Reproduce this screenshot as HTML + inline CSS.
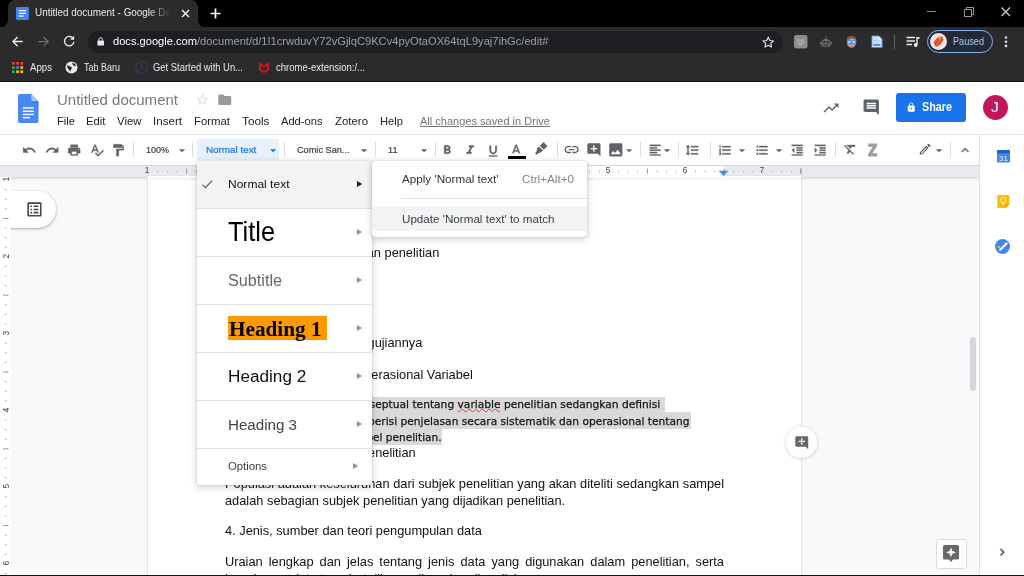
<!DOCTYPE html>
<html lang="en">
<head>
<meta charset="utf-8">
<title>Untitled document - Google Docs</title>
<style>
*{box-sizing:border-box;margin:0;padding:0}
html,body{width:1024px;height:576px;overflow:hidden;background:#fff}
body{opacity:.999}
body{position:relative;font-family:"Liberation Sans",sans-serif;color:#202124;-webkit-font-smoothing:antialiased}
.abs{position:absolute}
svg{position:absolute;overflow:visible}
.t{position:absolute;white-space:nowrap;line-height:1}
/* ---------- browser chrome ---------- */
#tabstrip{left:0;top:0;width:1024px;height:28px;background:#000}
#tab{left:8px;top:0;width:190px;height:28px;background:#2b2b2b;border-radius:7px 7px 0 0}
#tab:before,#tab:after{content:"";position:absolute;bottom:0;width:8px;height:8px;background:radial-gradient(circle at 0 0,rgba(0,0,0,0) 7.5px,#2b2b2b 8px)}
#tab:before{left:-8px}
#tab:after{right:-8px;transform:scaleX(-1)}
#navbar{left:0;top:27px;width:1024px;height:30px;background:#2b2b2b}
#omni{left:87.500px;top:30.800px;width:695.500px;height:22px;border-radius:11px;background:#1e1f22}
#bookbar{left:0;top:57px;width:1024px;height:24px;background:#2b2b2b}
#chromeedge{left:0;top:81px;width:1024px;height:1px;background:#111}
.ct{color:#e8eaed;font-size:10.500px}
.sx{transform-origin:0 0}
/* ---------- docs header ---------- */
.menu{font-size:11.4px;color:#202124;top:115.800px}
#tb{left:0;top:133.500px;width:1024px;height:32px;border-top:1px solid #e2e3e5;background:#fff}
svg[width="14.4"] path{stroke:#5f6368;stroke-width:.55px}
.sep{position:absolute;top:141.500px;width:1px;height:15.500px;background:#dadce0}
.tbt{font-size:9.800px;color:#3c4043;top:144.800px;-webkit-text-stroke:.2px currentColor}
/* ---------- doc area ---------- */
#canvas{left:0;top:166px;width:979px;height:410px;background:#f8f9fa}
#hruler{left:0;top:165px;width:979px;height:12.500px;background:#e8eaed;border-top:1px solid #d5d8dc;border-bottom:1.500px solid #d9dbdf}
#page{left:148px;top:176px;width:653px;height:400px;background:#fff;box-shadow:0 0 0 1px #e4e5e7}
.doc{font-size:14.2px;color:#111;line-height:1}
body>*{}
.comic{font-family:"DejaVu Sans","Liberation Sans",sans-serif;font-size:12.6px;color:#111;letter-spacing:-.2px;font-style:italic}
.hl{position:absolute;background:#d9d9d9}
/* ---------- menus ---------- */
#menu1{left:197px;top:160.500px;width:174.500px;height:324px;background:#fff;box-shadow:0 2px 6px 1px rgba(60,64,67,.22),0 0 2px rgba(60,64,67,.2);border-radius:0 0 3px 3px}
.row{position:absolute;left:0;width:175px;border-bottom:1px solid #dddfe2}
.arr{position:absolute;left:159px;width:0;height:0;border-left:6px solid #8b8e92;border-top:3px solid transparent;border-bottom:3px solid transparent}
#menu2{left:371.500px;top:160.700px;width:215.500px;height:76.300px;background:#fff;box-shadow:0 2px 6px 1px rgba(60,64,67,.22),0 0 2px rgba(60,64,67,.2);border-radius:4px}
.m2{font-size:12.5px;color:#3c4043;letter-spacing:-.05px}
/* ---------- side panel ---------- */
#side{left:979px;top:134.500px;width:45px;height:442px;background:#fff;border-left:1px solid #e0e1e3}
</style>
</head>
<body>
<!-- ======= BROWSER CHROME ======= -->
<div id="tabstrip" class="abs"></div>
<div id="tab" class="abs"></div>
<div id="navbar" class="abs"></div>
<div id="omni" class="abs"></div>
<div id="bookbar" class="abs"></div>
<div id="chromeedge" class="abs"></div>

<!-- tab -->
<svg class="abs" style="left:16.200px;top:6.900px" width="12.900" height="12.900" viewBox="0 0 14 14"><rect x="0" y="0" width="14" height="14" rx="1.5" fill="#4285f4"/><rect x="3" y="3.4" width="8" height="1.3" fill="#fff"/><rect x="3" y="6.3" width="8" height="1.3" fill="#fff"/><rect x="3" y="9.2" width="5.2" height="1.3" fill="#fff"/></svg>
<div class="t ct" id="tabtitle" style="transform-origin:0 0;transform:scaleX(.962);font-size:10.300px;left:35px;top:8.200px;width:141px;overflow:hidden;-webkit-mask-image:linear-gradient(90deg,#000 119px,transparent 141px)">Untitled document - Google Docs</div>
<svg class="abs" style="left:181px;top:9px" width="9" height="9" viewBox="0 0 9 9"><path d="M1 1L8 8M8 1L1 8" stroke="#e8eaed" stroke-width="1.5" fill="none"/></svg>
<svg class="abs" style="left:210px;top:8px" width="11" height="11" viewBox="0 0 11 11"><path d="M5.5 0.5V10.5M0.5 5.5H10.5" stroke="#fff" stroke-width="1.7" fill="none"/></svg>
<!-- window controls -->
<svg class="abs" style="left:926px;top:6px" width="12" height="12" viewBox="0 0 12 12"><path d="M1 5.5H10" stroke="#8a8a8a" stroke-width="1" fill="none"/></svg>
<svg class="abs" style="left:963px;top:6px" width="12" height="12" viewBox="0 0 12 12"><path d="M1.5 3.5H8.5V10.5H1.5ZM3.5 3.5V1.5H10.5V8.5H8.5" stroke="#9a9a9a" stroke-width="1" fill="none"/></svg>
<svg class="abs" style="left:1000px;top:6px" width="12" height="12" viewBox="0 0 12 12"><path d="M1.5 1.5L10 10M10 1.5L1.5 10" stroke="#d8d8d8" stroke-width="1.1" fill="none"/></svg>
<!-- nav buttons -->
<svg class="abs" style="left:12px;top:35.500px" width="11.200" height="11.200" viewBox="0 0 13 13"><path d="M12.5 6.5H1.5M6.5 1.2L1.2 6.5L6.5 11.8" stroke="#e8eaed" stroke-width="1.700" fill="none"/></svg>
<svg class="abs" style="left:37.800px;top:35.500px" width="11.200" height="11.200" viewBox="0 0 13 13"><path d="M0.5 6.5H11.5M6.5 1.2L11.8 6.5L6.5 11.8" stroke="#6b6d70" stroke-width="1.5" fill="none"/></svg>
<svg class="abs" style="left:62.800px;top:35px" width="12.400" height="12.400" viewBox="0 0 14 14"><path d="M11.6 4.2A5.3 5.3 0 1 0 12.3 7.8" stroke="#e8eaed" stroke-width="1.5" fill="none"/><path d="M12.6 0.8V5.4H8Z" fill="#e8eaed"/></svg>
<!-- omnibox -->
<svg class="abs" style="left:97.200px;top:37.200px" width="7.400" height="9" viewBox="0 0 9 11"><rect x="0.5" y="4.3" width="8" height="6.2" rx="0.8" fill="#e8eaed"/><path d="M2.4 4.5V3A2.1 2.1 0 0 1 6.6 3V4.5" stroke="#e8eaed" stroke-width="1.2" fill="none"/></svg>
<div class="t" id="url" style="transform-origin:0 0;transform:scaleX(0.9420);left:113px;top:36px;font-size:11.800px;color:#fff">docs.google.com<span style="color:#9aa0a6">/document/d/1I1crwduvY72vGjlqC9KCv4pyOtaOX64tqL9yaj7ihGc/edit#</span></div>
<svg class="abs" style="left:761.500px;top:35.700px" width="12.500" height="12.500" viewBox="0 0 14 14"><path d="M7 1.3L8.75 5.1L12.9 5.55L9.8 8.35L10.65 12.45L7 10.35L3.35 12.45L4.2 8.35L1.1 5.55L5.25 5.1Z" stroke="#e8eaed" stroke-width="1.2" fill="none" stroke-linejoin="round"/></svg>
<!-- extensions -->
<svg class="abs" style="left:793.500px;top:35px" width="13.500" height="13.500" viewBox="0 0 14 14"><rect x="0.500" y="0.500" width="13" height="13" rx="1.500" fill="#8b8d90" stroke="#a2a4a7" stroke-width=".7"/><path d="M4 3.800L5.600 5.200H8.400L10 3.800V8Q10 10.600 7 10.600Q4 10.600 4 8Z" fill="#9d9fa2" stroke="#b3b5b8" stroke-width=".7"/></svg>
<svg class="abs" style="left:818.500px;top:34.500px" width="14" height="14" viewBox="0 0 15 15"><path d="M3 12.500V8Q3 4 7.500 4Q12 4 12 8V12.500Z" fill="#626467"/><rect x="6.900" y="1.200" width="1.200" height="3" fill="#626467"/><rect x="0.800" y="7" width="2.200" height="3.500" rx=".8" fill="#626467"/><rect x="12" y="7" width="2.200" height="3.500" rx=".8" fill="#626467"/><circle cx="5.600" cy="7.600" r="1.200" fill="#2b2b2b"/><circle cx="9.400" cy="7.600" r="1.200" fill="#2b2b2b"/><rect x="5" y="10.300" width="5" height="1" fill="#2b2b2b"/></svg>
<svg class="abs" style="left:845px;top:35px" width="13" height="13.500" viewBox="0 0 15 15"><ellipse cx="7.500" cy="8.300" rx="5.400" ry="6" fill="#e8a27c"/><path d="M1.800 7Q1.500 1 7.500 1Q13.500 1 13.200 7Q11.500 4 8.500 3.800Q5 4 1.800 7Z" fill="#8b5a3c"/><circle cx="4.800" cy="8" r="2.300" fill="#e8f2ff" stroke="#3c82f0" stroke-width="1.300"/><circle cx="10.200" cy="8" r="2.300" fill="#e8f2ff" stroke="#3c82f0" stroke-width="1.300"/><circle cx="4.800" cy="8" r=".8" fill="#3c82f0"/><circle cx="10.200" cy="8" r=".8" fill="#3c82f0"/><path d="M5.800 12.200Q7.500 13.200 9.200 12.200" stroke="#b0503c" stroke-width=".9" fill="none"/></svg>
<svg class="abs" style="left:871px;top:35px" width="12" height="13.500" viewBox="0 0 14 15"><path d="M1 0.700H9.500L13 4.200V14.300H1Z" fill="#dfeafb" stroke="#3f7fe3" stroke-width="1.100"/><path d="M3 4H8M3 6H11M3 8H11" stroke="#9cc0f5" stroke-width=".9"/><rect x="2.800" y="10" width="8.400" height="2.400" fill="#4a90e8"/></svg>
<div class="abs" style="left:894px;top:35px;width:1px;height:14px;background:#5f6368"></div>
<svg class="abs" style="left:906px;top:36px" width="14" height="12" viewBox="0 0 14 12"><path d="M0.500 1.5H9M0.500 5H9M0.500 8.500H6" stroke="#e8eaed" stroke-width="1.4" fill="none"/><path d="M11 1V8.500" stroke="#e8eaed" stroke-width="1.4" fill="none"/><circle cx="9.700" cy="9" r="1.900" fill="#e8eaed"/><path d="M11 1H13.500V2.800H11Z" fill="#e8eaed"/></svg>
<!-- profile pill -->
<div class="abs" style="left:927px;top:30px;width:66px;height:23px;border-radius:12px;border:1px solid #8ab4f8;background:#242a35"></div>
<svg class="abs" style="left:930px;top:33px" width="17" height="17" viewBox="0 0 17 17"><circle cx="8.500" cy="8.500" r="8.500" fill="#f6e3df"/><path d="M3.500 9L8 4L12.500 3.500L13.500 7L10 12L6 14L6.500 10.500Z" fill="#e0532d"/><path d="M8 4L12.500 3.500L9.500 8Z" fill="#f08a4b"/><path d="M3.500 9L6.500 10.500L6 14Z" fill="#b93a1e"/></svg>
<div class="t" style="transform-origin:0 0;transform:scaleX(0.8873);left:953px;top:36.800px;font-size:10.300px;color:#a8c7fa">Paused</div>
<svg class="abs" style="left:1004.300px;top:35.900px" width="4" height="12" viewBox="0 0 4 12"><circle cx="2" cy="1.500" r="1.300" fill="#dadce0"/><circle cx="2" cy="5.700" r="1.300" fill="#dadce0"/><circle cx="2" cy="9.900" r="1.300" fill="#dadce0"/></svg>
<!-- bookmarks -->
<svg class="abs" style="left:12px;top:61.500px" width="11" height="11" viewBox="0 0 11 11"><rect x="0.0" y="0.0" width="2.700" height="2.700" fill="#ea4335"/><rect x="4.2" y="0.0" width="2.700" height="2.700" fill="#ea4335"/><rect x="8.4" y="0.0" width="2.700" height="2.700" fill="#ea4335"/><rect x="0.0" y="4.2" width="2.700" height="2.700" fill="#34a853"/><rect x="4.2" y="4.2" width="2.700" height="2.700" fill="#4285f4"/><rect x="8.4" y="4.2" width="2.700" height="2.700" fill="#fbbc04"/><rect x="0.0" y="8.4" width="2.700" height="2.700" fill="#34a853"/><rect x="4.2" y="8.4" width="2.700" height="2.700" fill="#fbbc04"/><rect x="8.4" y="8.4" width="2.700" height="2.700" fill="#fbbc04"/></svg>
<div class="t ct" style="transform-origin:0 0;transform:scaleX(0.9191);left:30px;top:62px">Apps</div>
<svg class="abs" style="left:65px;top:61px" width="13" height="13" viewBox="0 0 13 13"><circle cx="6.500" cy="6.500" r="6" fill="#e8eaed"/><path d="M2 4.500C4 4 5 5.500 6.500 6C7.500 7 6 8.500 5.500 10C4 9 2 7.500 2 4.500ZM7.500 1.500C9 2 10.500 3 11 5C9.500 5.500 8.500 4.500 7.500 3.500Z" fill="#2b2b2b"/></svg>
<div class="t ct" style="transform-origin:0 0;transform:scaleX(0.8565);left:84px;top:62px">Tab Baru</div>
<svg class="abs" style="left:134px;top:60px" width="15" height="15" viewBox="0 0 15 15"><path d="M7.500 1L13 4.200V10.800L7.500 14L2 10.800V4.200Z" stroke="#2c3a55" stroke-width="1.200" fill="none"/><path d="M7.500 1V7.500L2 10.800M7.500 7.500L13 10.800" stroke="#2c3a55" stroke-width="1.200" fill="none"/></svg>
<div class="t ct" style="transform-origin:0 0;transform:scaleX(0.8965);left:153px;top:62px">Get Started with Un...</div>
<svg class="abs" style="left:258px;top:61px" width="12" height="12.500" viewBox="0 0 12 13"><path d="M0.800 1.200L3.800 2.600L6 4.400L8.200 2.600L11.200 1.200V10L6 12.800L0.800 10Z" fill="#c4161c"/><path d="M3 4.600L6 6.900L9 4.600V8.900L6 10.500L3 8.900Z" fill="#2b2b2b"/></svg>
<div class="t ct" style="transform-origin:0 0;transform:scaleX(0.9077);left:276px;top:62px">chrome-extension:/...</div>
<!--CHROME-CONTENT-->

<!-- ======= DOCS HEADER ======= -->
<svg class="abs" style="left:18.100px;top:93.900px" width="20.500" height="29" viewBox="0 0 20.500 29"><path d="M2 0H13.300L20.500 7.200V27Q20.500 29 18.500 29H2Q0 29 0 27V2Q0 0 2 0Z" fill="#4688f4"/><path d="M13.300 0L20.500 7.200H15.300Q13.300 7.200 13.300 5.200Z" fill="#a6c5fa"/><path d="M14 7.200H20.500V12Z" fill="#3b78e0" opacity=".5"/><rect x="4.700" y="13.200" width="11.200" height="1.500" fill="#f1f6fe"/><rect x="4.700" y="16.500" width="11.200" height="1.500" fill="#f1f6fe"/><rect x="4.700" y="19.700" width="11.200" height="1.500" fill="#f1f6fe"/><rect x="4.700" y="22.900" width="7.500" height="1.500" fill="#f1f6fe"/></svg>
<div class="t" id="doctitle" style="transform-origin:0 0;transform:scaleX(1.0008);left:57px;top:92px;font-size:15px;color:#75797e">Untitled document</div>
<svg class="abs" style="left:195.3px;top:91.6px" width="15" height="15" viewBox="0 0 24 24"><path d="M22 9.240l-7.190-.620L12 2 9.190 8.630 2 9.240l5.460 4.730L5.820 21 12 17.270 18.180 21l-1.630-7.030L22 9.240zM12 15.400l-3.760 2.270 1-4.280-3.320-2.880 4.380-.380L12 6.100l1.710 4.040 4.380.380-3.320 2.880 1 4.280L12 15.400z" fill="#dcdcdc"/></svg>
<svg class="abs" style="left:217px;top:91.7px" width="15.5" height="15.5" viewBox="0 0 24 24"><path d="M10 4H4c-1.100 0-1.990.900-1.990 2L2 18c0 1.100.900 2 2 2h16c1.100 0 2-.900 2-2V8c0-1.100-.900-2-2-2h-8l-2-2z" fill="#9a9a9a"/></svg>
<div class="t menu" style="transform-origin:0 0;transform:scaleX(0.9804);left:57px">File</div>
<div class="t menu" style="transform-origin:0 0;transform:scaleX(0.9928);left:86px">Edit</div>
<div class="t menu" style="transform-origin:0 0;transform:scaleX(1.0006);left:117px">View</div>
<div class="t menu" style="transform-origin:0 0;transform:scaleX(1.0175);left:153px">Insert</div>
<div class="t menu" style="transform-origin:0 0;transform:scaleX(0.9978);left:194px">Format</div>
<div class="t menu" style="transform-origin:0 0;transform:scaleX(1.0341);left:242px">Tools</div>
<div class="t menu" style="transform-origin:0 0;transform:scaleX(0.9779);left:281px">Add-ons</div>
<div class="t menu" style="transform-origin:0 0;transform:scaleX(1.0024);left:335px">Zotero</div>
<div class="t menu" style="transform-origin:0 0;transform:scaleX(0.9813);left:380px">Help</div>
<div class="t menu" id="saved" style="transform-origin:0 0;transform:scaleX(0.9685);left:420px;color:#70757a;text-decoration:underline">All changes saved in Drive</div>
<svg class="abs" style="left:821.5px;top:98.5px" width="18" height="18" viewBox="0 0 24 24"><path d="M16 6l2.290 2.290-4.880 4.880-4-4L2 16.590 3.410 18l6-6 4 4 6.300-6.290L22 12V6z" fill="#5f6368"/></svg>
<svg class="abs" style="left:862px;top:98px" width="18.5" height="18.5" viewBox="0 0 24 24"><path d="M21.990 4c0-1.100-.890-2-1.990-2H4c-1.100 0-2 .900-2 2v12c0 1.100.900 2 2 2h14l4 4-.010-18zM18 14H6v-2h12v2zm0-3H6V9h12v2zm0-3H6V6h12v2z" fill="#5f6368"/></svg>
<div class="abs" style="left:896px;top:93px;width:69.800px;height:29px;border-radius:3px;background:#1a73e8"></div>
<svg class="abs" style="left:906px;top:101.5px" width="10.5" height="10.5" viewBox="0 0 24 24"><path d="M18 8h-1V6c0-2.760-2.240-5-5-5S7 3.240 7 6v2H6c-1.100 0-2 .900-2 2v10c0 1.100.900 2 2 2h12c1.100 0 2-.900 2-2V10c0-1.100-.900-2-2-2zm-6 9c-1.100 0-2-.900-2-2s.900-2 2-2 2 .900 2 2-.900 2-2 2zm3.100-9H8.900V6c0-1.710 1.390-3.100 3.100-3.100 1.710 0 3.100 1.390 3.100 3.100v2z" fill="#fff"/></svg>
<div class="t" id="share" style="transform-origin:0 0;transform:scaleX(0.8993);left:921.500px;top:100.500px;font-size:12px;font-weight:bold;color:#fff">Share</div>
<div class="abs" style="left:982.500px;top:94.500px;width:25.500px;height:25.500px;border-radius:50%;background:#c2185b"></div>
<div class="t" style="left:991px;top:99.300px;font-size:15.500px;color:#fff">J</div>
<div id="tb" class="abs"></div>
<svg class="abs" style="left:22px;top:142.6px" width="14.4" height="14.4" viewBox="0 0 24 24"><path d="M12.5 8c-2.65 0-5.05.99-6.9 2.6L2 7v9h9l-3.62-3.620c1.390-1.160 3.160-1.880 5.120-1.880 3.540 0 6.550 2.310 7.600 5.500l2.370-.780C21.080 11.030 17.150 8 12.500 8z" fill="#5f6368"/></svg>
<svg class="abs" style="left:44.7px;top:142.6px" width="14.4" height="14.4" viewBox="0 0 24 24"><path d="M18.400 10.600C16.550 8.990 14.150 8 11.500 8c-4.650 0-8.580 3.030-9.960 7.220L3.900 16c1.050-3.190 4.050-5.500 7.600-5.500 1.950 0 3.730.720 5.120 1.880L13 16h9V7l-3.600 3.600z" fill="#5f6368"/></svg>
<svg class="abs" style="left:66.8px;top:143px" width="14.4" height="14.4" viewBox="0 0 24 24"><path d="M19 8H5c-1.660 0-3 1.340-3 3v6h4v4h12v-4h4v-6c0-1.660-1.340-3-3-3zm-3 11H8v-5h8v5zm3-7c-.550 0-1-.450-1-1s.450-1 1-1 1 .450 1 1-.450 1-1 1zm-1-9H6v4h12V3z" fill="#5f6368"/></svg>
<svg class="abs" style="left:89.5px;top:143.2px" width="14.4" height="14.4" viewBox="0 0 24 24"><path d="M12.450 16h2.090L9.430 3H7.570L2.460 16h2.090l1.120-3h5.640l1.140 3zm-6.020-5L8.500 5.480 10.570 11H6.430zm15.160.590l-8.090 8.090L9.830 16l-1.410 1.410 5.090 5.090L23 13l-1.410-1.410z" fill="#5f6368"/></svg>
<svg class="abs" style="left:111.4px;top:143.4px" width="14.4" height="14.4" viewBox="0 0 24 24"><path d="M18 4V3c0-.550-.450-1-1-1H5c-.550 0-1 .450-1 1v4c0 .550.450 1 1 1h12c.550 0 1-.450 1-1V6h1v4H9v11c0 .550.450 1 1 1h2c.550 0 1-.450 1-1v-9h8V4h-3z" fill="#5f6368"/></svg>
<div class="sep" style="left:133px"></div>
<div class="sep" style="left:192px"></div>
<div class="sep" style="left:283.5px"></div>
<div class="sep" style="left:374.5px"></div>
<div class="sep" style="left:434.5px"></div>
<div class="sep" style="left:556.5px"></div>
<div class="sep" style="left:639.5px"></div>
<div class="sep" style="left:678px"></div>
<div class="sep" style="left:709.5px"></div>
<div class="sep" style="left:834.5px"></div>
<div class="sep" style="left:950px"></div>
<div class="t tbt" style="transform-origin:0 0;transform:scaleX(0.9177);left:146px">100%</div>
<svg class="abs" style="left:179.3px;top:148.6px" width="6.2" height="3.4" viewBox="0 0 10 5"><path d="M0 0L5 5L10 0Z" fill="#5f6368"/></svg>
<div class="abs" style="left:197px;top:139.200px;width:82px;height:21.300px;background:#e8f0fe;border-radius:2px 2px 0 0"></div>
<div class="t tbt" id="ntbtn" style="transform-origin:0 0;transform:scaleX(1.0041);left:205.500px;color:#1a73e8">Normal text</div>
<svg class="abs" style="left:269.79999999999995px;top:148.6px" width="6.2" height="3.4" viewBox="0 0 10 5"><path d="M0 0L5 5L10 0Z" fill="#1a73e8"/></svg>
<div class="t tbt" id="fontbtn" style="transform-origin:0 0;transform:scaleX(0.9359);left:297px">Comic San...</div>
<svg class="abs" style="left:360.79999999999995px;top:148.6px" width="6.2" height="3.4" viewBox="0 0 10 5"><path d="M0 0L5 5L10 0Z" fill="#5f6368"/></svg>
<div class="t tbt" style="transform-origin:0 0;transform:scaleX(0.9339);left:387.600px">11</div>
<svg class="abs" style="left:420.9px;top:148.6px" width="6.2" height="3.4" viewBox="0 0 10 5"><path d="M0 0L5 5L10 0Z" fill="#5f6368"/></svg>
<svg class="abs" style="left:440.4px;top:142.85px" width="14.4" height="14.4" viewBox="0 0 24 24"><path d="M15.600 10.790c.970-.670 1.650-1.770 1.650-2.790 0-2.260-1.750-4-4-4H7v14h7.040c2.090 0 3.710-1.700 3.710-3.790 0-1.520-.860-2.820-2.150-3.420zM10 6.500h3c.830 0 1.500.670 1.500 1.500s-.670 1.500-1.500 1.500h-3v-3zm3.500 9H10v-3h3.500c.830 0 1.500.670 1.500 1.500s-.670 1.500-1.500 1.500z" fill="#5f6368"/></svg>
<svg class="abs" style="left:463px;top:142.85px" width="14.4" height="14.4" viewBox="0 0 24 24"><path d="M10 4v3h2.210l-3.420 8H6v3h8v-3h-2.210l3.420-8H18V4z" fill="#5f6368"/></svg>
<svg class="abs" style="left:485.5px;top:143.5px" width="14.4" height="14.4" viewBox="0 0 24 24"><path d="M12 17c3.310 0 6-2.690 6-6V3h-2.500v8c0 1.930-1.570 3.500-3.500 3.500S8.500 12.930 8.500 11V3H6v8c0 3.310 2.690 6 6 6zm-7 2v2h14v-2H5z" fill="#5f6368"/></svg>
<svg class="abs" style="left:509.2px;top:142.8px" width="14.4" height="14.4" viewBox="0 0 24 24"><path d="M11 3L5.500 17h2.250l1.120-3h6.250l1.120 3h2.250L13 3h-2zm-1.380 9L12 5.670 14.380 12H9.620z" fill="#5f6368"/></svg>
<div class="abs" style="left:508px;top:156.300px;width:18px;height:3px;background:#000"></div>
<svg class="abs" style="left:534px;top:142.500px" width="14.500" height="14.500" viewBox="0 0 14.500 14.500"><g transform="translate(1.900 10.600) rotate(-45)" fill="#5f6368"><path d="M-0.600 0.200L0.300 -0.900L2.200 -1.100L4.300 -2.800H7.200V2.800H4.300L2.400 1.400L-0.200 1.600Z"/><rect x="8.300" y="-2.800" width="5.200" height="5.600" rx=".7"/></g></svg>
<svg class="abs" style="left:563px;top:141.400px" width="17.200" height="17.200" viewBox="0 0 24 24"><path d="M3.900 12c0-1.710 1.390-3.100 3.100-3.100h4V7H7c-2.760 0-5 2.240-5 5s2.240 5 5 5h4v-1.900H7c-1.710 0-3.100-1.390-3.100-3.100zM8 13h8v-2H8v2zm9-6h-4v1.900h4c1.710 0 3.100 1.390 3.100 3.100s-1.390 3.100-3.100 3.100h-4V17h4c2.760 0 5-2.240 5-5s-2.240-5-5-5z" fill="#5f6368"/></svg>
<svg class="abs" style="left:586.2px;top:142.4px" width="15.8" height="15.8" viewBox="0 0 24 24"><path d="M22 4c0-1.100-.900-2-2-2H4c-1.100 0-2 .900-2 2v12c0 1.100.900 2 2 2h14l4 4V4zm-5 7h-4v4h-2v-4H7V9h4V5h2v4h4v2z" fill="#5f6368"/></svg>
<svg class="abs" style="left:606.8px;top:141.2px" width="17.6" height="17.6" viewBox="0 0 24 24"><path d="M21 19V5c0-1.100-.900-2-2-2H5c-1.100 0-2 .900-2 2v14c0 1.100.900 2 2 2h14c1.100 0 2-.900 2-2zM8.500 13.500l2.500 3.010L14.500 12l4.500 6H5l3.500-4.500z" fill="#5f6368"/></svg>
<svg class="abs" style="left:626.15px;top:148.6px" width="6.2" height="3.4" viewBox="0 0 10 5"><path d="M0 0L5 5L10 0Z" fill="#5f6368"/></svg>
<svg class="abs" style="left:648px;top:142.65px" width="14.4" height="14.4" viewBox="0 0 24 24"><path d="M15 15H3v2h12v-2zm0-8H3v2h12V7zM3 13h18v-2H3v2zm0 8h18v-2H3v2zM3 3v2h18V3H3z" fill="#5f6368"/></svg>
<svg class="abs" style="left:664.4px;top:148.6px" width="6.2" height="3.4" viewBox="0 0 10 5"><path d="M0 0L5 5L10 0Z" fill="#5f6368"/></svg>
<svg class="abs" style="left:685.4px;top:142.75px" width="14.4" height="14.4" viewBox="0 0 24 24"><path d="M6 7h2.500L5 3.500 1.500 7H4v10H1.500L5 20.500 8.500 17H6V7zm4-2v2h12V5H10zm0 14h12v-2H10v2zm0-6h12v-2H10v2z" fill="#5f6368"/></svg>
<svg class="abs" style="left:718.2px;top:142.6px" width="14.4" height="14.4" viewBox="0 0 24 24"><path d="M2 17h2v.5H3v1h1v.5H2v1h3v-4H2v1zm1-9h1V4H2v1h1v3zm-1 3h1.800L2 13.100v.900h3v-1H3.200L5 10.900V10H2v1zm5-6v2h14V5H7zm0 14h14v-2H7v2zm0-6h14v-2H7v2z" fill="#5f6368"/></svg>
<svg class="abs" style="left:739.4px;top:148.6px" width="6.2" height="3.4" viewBox="0 0 10 5"><path d="M0 0L5 5L10 0Z" fill="#5f6368"/></svg>
<svg class="abs" style="left:755.4px;top:142.6px" width="14.4" height="14.4" viewBox="0 0 24 24"><path d="M4 10.500c-.830 0-1.500.670-1.500 1.500s.670 1.500 1.500 1.500 1.500-.670 1.500-1.500-.670-1.500-1.500-1.500zm0-6c-.830 0-1.500.670-1.500 1.500S3.170 7.500 4 7.500 5.500 6.830 5.500 6 4.830 4.500 4 4.500zm0 12c-.830 0-1.500.680-1.500 1.500s.680 1.500 1.500 1.500 1.500-.680 1.500-1.500-.670-1.500-1.500-1.500zM7 19h14v-2H7v2zm0-6h14v-2H7v2zm0-8v2h14V5H7z" fill="#5f6368"/></svg>
<svg class="abs" style="left:776.3px;top:148.6px" width="6.2" height="3.4" viewBox="0 0 10 5"><path d="M0 0L5 5L10 0Z" fill="#5f6368"/></svg>
<svg class="abs" style="left:790.3px;top:142.6px" width="14.4" height="14.4" viewBox="0 0 24 24"><path d="M11 17h10v-2H11v2zm-8-5l4 4V8l-4 4zm0 9h18v-2H3v2zM3 3v2h18V3H3zm8 6h10V7H11v2zm0 4h10v-2H11v2z" fill="#5f6368"/></svg>
<svg class="abs" style="left:812.8px;top:142.6px" width="14.4" height="14.4" viewBox="0 0 24 24"><path d="M3 21h18v-2H3v2zM3 8v8l4-4-4-4zm8 9h10v-2H11v2zM3 3v2h18V3H3zm8 6h10V7H11v2zm0 4h10v-2H11v2z" fill="#5f6368"/></svg>
<svg class="abs" style="left:843.2px;top:142.2px" width="14.4" height="14.4" viewBox="0 0 24 24"><path d="M3.270 5L2 6.270l6.970 6.970L6.500 19h3l1.570-3.660L16.730 21 18 19.730 3.550 5.270 3.270 5zM6 5v.180L8.820 8h2.400l-.720 1.680 2.100 2.100L14.210 8H20V5H6z" fill="#5f6368"/></svg>
<div class="t" style="left:867.600px;top:143.700px;font-size:15px;font-weight:bold;font-family:'DejaVu Sans','Liberation Sans',sans-serif;color:#9e9e9e;-webkit-text-stroke:1px #9e9e9e;transform-origin:0 0;transform:scaleX(.86)">Z</div>
<svg class="abs" style="left:917.5px;top:141.8px" width="14.41" height="14.41" viewBox="0 0 24 24"><path d="M14.060 9.020l.920.920L5.920 19H5v-.920l9.060-9.060M17.660 3c-.250 0-.510.100-.700.290l-1.830 1.830 3.750 3.750 1.830-1.830c.390-.390.390-1.020 0-1.410l-2.340-2.340c-.200-.200-.450-.290-.710-.290zm-3.600 3.190L3 17.250V21h3.750L17.810 9.940l-3.750-3.750z" fill="#5f6368"/></svg>
<svg class="abs" style="left:936.3px;top:148.6px" width="6.2" height="3.4" viewBox="0 0 10 5"><path d="M0 0L5 5L10 0Z" fill="#5f6368"/></svg>
<svg class="abs" style="left:958.1px;top:142.5px" width="14.4" height="14.4" viewBox="0 0 24 24"><path d="M12 8l-6 6 1.410 1.410L12 10.830l4.590 4.580L18 14z" fill="#5f6368"/></svg>
<!--DOCS-HEADER-->

<!-- ======= DOC AREA ======= -->
<div id="canvas" class="abs"></div>
<div id="hruler" class="abs"></div>
<div id="page" class="abs"></div>
<div class="abs" style="left:225px;top:165.800px;width:498.500px;height:10px;background:#fff"></div>
<svg class="abs" style="left:-0.400px;top:-0.400px" width="1024" height="576"><rect x="157.3" y="170.500" width="1" height="2" fill="#b4b8bd"/><rect x="166.9" y="170.500" width="1" height="2" fill="#b4b8bd"/><rect x="176.5" y="170.500" width="1" height="2" fill="#b4b8bd"/><rect x="186.1" y="168.500" width="1" height="5.500" fill="#9aa0a6"/><rect x="195.7" y="170.500" width="1" height="2" fill="#b4b8bd"/><rect x="205.3" y="170.500" width="1" height="2" fill="#b4b8bd"/><rect x="214.9" y="170.500" width="1" height="2" fill="#b4b8bd"/><rect x="234.1" y="170.500" width="1" height="2" fill="#b4b8bd"/><rect x="243.7" y="170.500" width="1" height="2" fill="#b4b8bd"/><rect x="253.3" y="170.500" width="1" height="2" fill="#b4b8bd"/><rect x="262.9" y="168.500" width="1" height="5.500" fill="#9aa0a6"/><rect x="272.5" y="170.500" width="1" height="2" fill="#b4b8bd"/><rect x="282.1" y="170.500" width="1" height="2" fill="#b4b8bd"/><rect x="291.7" y="170.500" width="1" height="2" fill="#b4b8bd"/><rect x="310.9" y="170.500" width="1" height="2" fill="#b4b8bd"/><rect x="320.5" y="170.500" width="1" height="2" fill="#b4b8bd"/><rect x="330.1" y="170.500" width="1" height="2" fill="#b4b8bd"/><rect x="339.7" y="168.500" width="1" height="5.500" fill="#9aa0a6"/><rect x="349.3" y="170.500" width="1" height="2" fill="#b4b8bd"/><rect x="358.9" y="170.500" width="1" height="2" fill="#b4b8bd"/><rect x="368.5" y="170.500" width="1" height="2" fill="#b4b8bd"/><rect x="387.7" y="170.500" width="1" height="2" fill="#b4b8bd"/><rect x="397.3" y="170.500" width="1" height="2" fill="#b4b8bd"/><rect x="406.9" y="170.500" width="1" height="2" fill="#b4b8bd"/><rect x="416.5" y="168.500" width="1" height="5.500" fill="#9aa0a6"/><rect x="426.1" y="170.500" width="1" height="2" fill="#b4b8bd"/><rect x="435.7" y="170.500" width="1" height="2" fill="#b4b8bd"/><rect x="445.3" y="170.500" width="1" height="2" fill="#b4b8bd"/><rect x="464.5" y="170.500" width="1" height="2" fill="#b4b8bd"/><rect x="474.1" y="170.500" width="1" height="2" fill="#b4b8bd"/><rect x="483.7" y="170.500" width="1" height="2" fill="#b4b8bd"/><rect x="493.3" y="168.500" width="1" height="5.500" fill="#9aa0a6"/><rect x="502.9" y="170.500" width="1" height="2" fill="#b4b8bd"/><rect x="512.5" y="170.500" width="1" height="2" fill="#b4b8bd"/><rect x="522.1" y="170.500" width="1" height="2" fill="#b4b8bd"/><rect x="541.3" y="170.500" width="1" height="2" fill="#b4b8bd"/><rect x="550.9" y="170.500" width="1" height="2" fill="#b4b8bd"/><rect x="560.5" y="170.500" width="1" height="2" fill="#b4b8bd"/><rect x="570.1" y="168.500" width="1" height="5.500" fill="#9aa0a6"/><rect x="579.7" y="170.500" width="1" height="2" fill="#b4b8bd"/><rect x="589.3" y="170.500" width="1" height="2" fill="#b4b8bd"/><rect x="598.9" y="170.500" width="1" height="2" fill="#b4b8bd"/><rect x="618.1" y="170.500" width="1" height="2" fill="#b4b8bd"/><rect x="627.7" y="170.500" width="1" height="2" fill="#b4b8bd"/><rect x="637.3" y="170.500" width="1" height="2" fill="#b4b8bd"/><rect x="646.9" y="168.500" width="1" height="5.500" fill="#9aa0a6"/><rect x="656.5" y="170.500" width="1" height="2" fill="#b4b8bd"/><rect x="666.1" y="170.500" width="1" height="2" fill="#b4b8bd"/><rect x="675.7" y="170.500" width="1" height="2" fill="#b4b8bd"/><rect x="694.9" y="170.500" width="1" height="2" fill="#b4b8bd"/><rect x="704.5" y="170.500" width="1" height="2" fill="#b4b8bd"/><rect x="714.1" y="170.500" width="1" height="2" fill="#b4b8bd"/><rect x="723.7" y="168.500" width="1" height="5.500" fill="#9aa0a6"/><rect x="733.3" y="170.500" width="1" height="2" fill="#b4b8bd"/><rect x="742.9" y="170.500" width="1" height="2" fill="#b4b8bd"/><rect x="752.5" y="170.500" width="1" height="2" fill="#b4b8bd"/><rect x="771.7" y="170.500" width="1" height="2" fill="#b4b8bd"/><rect x="781.3" y="170.500" width="1" height="2" fill="#b4b8bd"/><rect x="790.9" y="170.500" width="1" height="2" fill="#b4b8bd"/><rect x="800.5" y="168.500" width="1" height="5.500" fill="#9aa0a6"/><rect x="800.300" y="168.500" width="1" height="5.500" fill="#9aa0a6"/><path d="M718.700 170.800H728.300L723.500 176Z" fill="#4285f4"/></svg>
<div class="t" style="left:142.3px;top:166.300px;width:10px;text-align:center;font-size:9.300px;color:#3c4043;transform:scaleX(.88)">1</div>
<div class="t" style="left:295.9px;top:166.300px;width:10px;text-align:center;font-size:9.300px;color:#3c4043;transform:scaleX(.88)">1</div>
<div class="t" style="left:372.7px;top:166.300px;width:10px;text-align:center;font-size:9.300px;color:#3c4043;transform:scaleX(.88)">2</div>
<div class="t" style="left:449.5px;top:166.300px;width:10px;text-align:center;font-size:9.300px;color:#3c4043;transform:scaleX(.88)">3</div>
<div class="t" style="left:526.3px;top:166.300px;width:10px;text-align:center;font-size:9.300px;color:#3c4043;transform:scaleX(.88)">4</div>
<div class="t" style="left:603.1px;top:166.300px;width:10px;text-align:center;font-size:9.300px;color:#3c4043;transform:scaleX(.88)">5</div>
<div class="t" style="left:679.9px;top:166.300px;width:10px;text-align:center;font-size:9.300px;color:#3c4043;transform:scaleX(.88)">6</div>
<div class="t" style="left:756.7px;top:166.300px;width:10px;text-align:center;font-size:9.300px;color:#3c4043;transform:scaleX(.88)">7</div>
<div class="abs" style="left:-8px;top:190.500px;width:63.500px;height:37px;border-radius:0 18.500px 18.500px 0;background:#fff;box-shadow:0 1px 2px rgba(60,64,67,.28),0 1px 3px 1px rgba(60,64,67,.12)"></div>
<div class="abs" style="left:0;top:177px;width:10.800px;height:399px;background:#fff"></div>
<div class="abs" style="left:0;top:177.500px;width:979px;height:3px;background:linear-gradient(rgba(60,64,67,.09),rgba(60,64,67,0))"></div>
<svg class="abs" style="left:-0.400px;top:1.200px" width="12" height="576"><rect x="4.800" y="188.1" width="2" height="1" fill="#b4b8bd"/><rect x="4.800" y="197.7" width="2" height="1" fill="#b4b8bd"/><rect x="4.800" y="207.3" width="2" height="1" fill="#b4b8bd"/><rect x="3" y="216.9" width="5.500" height="1" fill="#9aa0a6"/><rect x="4.800" y="226.5" width="2" height="1" fill="#b4b8bd"/><rect x="4.800" y="236.1" width="2" height="1" fill="#b4b8bd"/><rect x="4.800" y="245.7" width="2" height="1" fill="#b4b8bd"/><rect x="4.800" y="264.9" width="2" height="1" fill="#b4b8bd"/><rect x="4.800" y="274.5" width="2" height="1" fill="#b4b8bd"/><rect x="4.800" y="284.1" width="2" height="1" fill="#b4b8bd"/><rect x="3" y="293.7" width="5.500" height="1" fill="#9aa0a6"/><rect x="4.800" y="303.3" width="2" height="1" fill="#b4b8bd"/><rect x="4.800" y="312.9" width="2" height="1" fill="#b4b8bd"/><rect x="4.800" y="322.5" width="2" height="1" fill="#b4b8bd"/><rect x="4.800" y="341.7" width="2" height="1" fill="#b4b8bd"/><rect x="4.800" y="351.3" width="2" height="1" fill="#b4b8bd"/><rect x="4.800" y="360.9" width="2" height="1" fill="#b4b8bd"/><rect x="3" y="370.5" width="5.500" height="1" fill="#9aa0a6"/><rect x="4.800" y="380.1" width="2" height="1" fill="#b4b8bd"/><rect x="4.800" y="389.7" width="2" height="1" fill="#b4b8bd"/><rect x="4.800" y="399.3" width="2" height="1" fill="#b4b8bd"/><rect x="4.800" y="418.5" width="2" height="1" fill="#b4b8bd"/><rect x="4.800" y="428.1" width="2" height="1" fill="#b4b8bd"/><rect x="4.800" y="437.7" width="2" height="1" fill="#b4b8bd"/><rect x="3" y="447.3" width="5.500" height="1" fill="#9aa0a6"/><rect x="4.800" y="456.9" width="2" height="1" fill="#b4b8bd"/><rect x="4.800" y="466.5" width="2" height="1" fill="#b4b8bd"/><rect x="4.800" y="476.1" width="2" height="1" fill="#b4b8bd"/><rect x="4.800" y="495.3" width="2" height="1" fill="#b4b8bd"/><rect x="4.800" y="504.9" width="2" height="1" fill="#b4b8bd"/><rect x="4.800" y="514.5" width="2" height="1" fill="#b4b8bd"/><rect x="3" y="524.1" width="5.500" height="1" fill="#9aa0a6"/><rect x="4.800" y="533.7" width="2" height="1" fill="#b4b8bd"/><rect x="4.800" y="543.3" width="2" height="1" fill="#b4b8bd"/><rect x="4.800" y="552.9" width="2" height="1" fill="#b4b8bd"/><rect x="4.800" y="572.1" width="2" height="1" fill="#b4b8bd"/></svg>
<div class="t" style="left:0.500px;top:175.2px;width:10px;height:8px;text-align:center;font-size:8.500px;color:#3c4043;transform:rotate(-90deg)">1</div>
<div class="t" style="left:0.500px;top:252.0px;width:10px;height:8px;text-align:center;font-size:8.500px;color:#3c4043;transform:rotate(-90deg)">2</div>
<div class="t" style="left:0.500px;top:328.8px;width:10px;height:8px;text-align:center;font-size:8.500px;color:#3c4043;transform:rotate(-90deg)">3</div>
<div class="t" style="left:0.500px;top:405.6px;width:10px;height:8px;text-align:center;font-size:8.500px;color:#3c4043;transform:rotate(-90deg)">4</div>
<div class="t" style="left:0.500px;top:482.4px;width:10px;height:8px;text-align:center;font-size:8.500px;color:#3c4043;transform:rotate(-90deg)">5</div>
<div class="t" style="left:0.500px;top:559.2px;width:10px;height:8px;text-align:center;font-size:8.500px;color:#3c4043;transform:rotate(-90deg)">6</div>
<svg class="abs" style="left:25.400px;top:200px" width="18.900" height="18.900" viewBox="0 0 24 24"><path d="M19 5v14H5V5h14m1.100-2H3.900c-.500 0-.900.400-.900.900v16.200c0 .400.400.900.900.900h16.200c.400 0 .900-.500.900-.900V3.900c0-.500-.500-.900-.900-.900zM11 7h6v2h-6V7zm0 4h6v2h-6v-2zm0 4h6v2h-6zM7 7h2v2H7zm0 4h2v2H7zm0 4h2v2H7z" fill="#444746"/></svg>
<div class="t" style="right:584.7px;top:246.76px;font-size:12.8px;transform-origin:100% 0;transform:scaleX(1);color:#111;">1. Latar belakang dan tujuan penelitian</div>
<div class="t" style="right:601.7px;top:337.46px;font-size:12.8px;transform-origin:100% 0;transform:scaleX(1);color:#111;">2. Hipotesis dan cara pengujiannya</div>
<div class="t" style="right:551.2px;top:368.66px;font-size:12.8px;transform-origin:100% 0;transform:scaleX(1);color:#111;">2. Definisi Konsep dan Operasional Variabel</div>
<div class="hl" style="left:225px;top:397px;width:439.500px;height:15.500px"></div>
<div class="hl" style="left:225px;top:412.300px;width:466px;height:16.400px"></div>
<div class="hl" style="left:225px;top:428.500px;width:217px;height:16.200px"></div>
<div class="t" style="right:364px;top:399.00px;font-size:11.300px;font-family:'DejaVu Sans','Liberation Sans',sans-serif;transform-origin:100% 0;transform:scaleX(0.944);color:#111;-webkit-text-stroke:.25px #111;">Berisi penjelasan definisi konseptual tentang <span style="text-decoration:underline wavy #e53935 .7px;text-underline-offset:.3px">variable</span> penelitian sedangkan definisi</div>
<div class="t" style="right:335px;top:415.60px;font-size:11.300px;font-family:'DejaVu Sans','Liberation Sans',sans-serif;transform-origin:100% 0;transform:scaleX(0.943);color:#111;-webkit-text-stroke:.25px #111;">operasional variabel berisi penjelasan secara sistematik dan operasional tentang</div>
<div class="t" style="right:582.5px;top:431.50px;font-size:11.300px;font-family:'DejaVu Sans','Liberation Sans',sans-serif;transform-origin:100% 0;transform:scaleX(0.932);color:#111;-webkit-text-stroke:.25px #111;">pengukuran variabel-variabel penelitian.</div>
<div class="t" style="right:608.3px;top:447.200px;font-size:12.8px;transform-origin:100% 0;transform:scaleX(1);color:#111;">3. Populasi dan sampel penelitian</div>
<div class="t" style="left:225px;top:477.96px;width:499px;font-size:12.8px;color:#111;white-space:normal;text-align:justify;text-align-last:justify">Populasi adalah keseluruhan dari subjek penelitian yang akan diteliti sedangkan sampel</div>
<div class="t" style="left:225px;top:494.96px;font-size:12.8px;color:#111;">adalah sebagian subjek penelitian yang dijadikan penelitian.</div>
<div class="t" style="left:225px;top:524.96px;font-size:12.8px;color:#111;">4. Jenis, sumber dan teori pengumpulan data</div>
<div class="t" style="left:225px;top:555.96px;width:499px;font-size:12.8px;color:#111;white-space:normal;text-align:justify;text-align-last:justify">Uraian lengkap dan jelas tentang jenis data yang digunakan dalam penelitian, serta</div>
<div class="t" style="left:225px;top:572.96px;font-size:12.8px;color:#111;">bagaimana data tersebut dikumpulkan dan dianalisis.</div>
<div class="abs" style="left:786px;top:426.500px;width:31px;height:31px;border-radius:50%;background:#fff;box-shadow:0 1px 3px rgba(60,64,67,.14),0 0 4px 1px rgba(60,64,67,.07)"></div>
<svg class="abs" style="left:794px;top:435px" width="15.500" height="15.500" viewBox="0 0 24 24"><path d="M22 4c0-1.100-.900-2-2-2H4c-1.100 0-2 .900-2 2v12c0 1.100.900 2 2 2h14l4 4V4zm-5 7h-4v4h-2v-4H7V9h4V5h2v4h4v2z" fill="#686868"/></svg>
<div class="abs" style="left:969.500px;top:337px;width:6.500px;height:54px;border-radius:3.500px;background:#d5d7da"></div>
<div class="abs" style="left:936px;top:538.500px;width:30.500px;height:30px;border-radius:3px;background:#fff;border:1px solid #dadce0"></div>
<svg class="abs" style="left:943px;top:545px" width="16" height="18" viewBox="0 0 16 18"><path d="M1.500 0H14.500Q16 0 16 1.500V13Q16 14.500 14.500 14.500H10L8 17L6 14.500H1.500Q0 14.500 0 13V1.500Q0 0 1.500 0Z" fill="#686868"/><path d="M8 2.500L9.400 6L13 7.300L9.400 8.700L8 12.200L6.600 8.700L3 7.300L6.600 6Z" fill="#fff"/></svg>
<!--DOC-CONTENT-->

<!-- ======= SIDE PANEL ======= -->
<div id="side" class="abs"></div>
<svg class="abs" style="left:996.800px;top:150.200px" width="13" height="12.500" viewBox="0 0 13 12.500"><rect x="0" y="0" width="13" height="12.500" rx="1.200" fill="#4285f4"/><path d="M1.200 0H11.800Q13 0 13 1.200V3.200H0V1.200Q0 0 1.200 0Z" fill="#1a62d0"/><text x="6.500" y="10.800" text-anchor="middle" font-family="Liberation Sans, sans-serif" font-size="8" fill="#e8f0fe">31</text></svg>
<svg class="abs" style="left:996.600px;top:194.800px" width="12.600" height="13" viewBox="0 0 13 14"><path d="M1.500 0H11.500Q13 0 13 1.500V10L9 14H1.500Q0 14 0 12.500V1.500Q0 0 1.500 0Z" fill="#fbbc04"/><path d="M9 14V10H13Z" fill="#f29900"/><path d="M6.500 2.500A2.600 2.600 0 0 0 5 7.200V8.500H8V7.200A2.600 2.600 0 0 0 6.500 2.500Z" fill="none" stroke="#fff" stroke-width=".9"/><rect x="5.200" y="9.300" width="2.600" height=".9" fill="#fff"/></svg>
<svg class="abs" style="left:995.200px;top:239.200px" width="15" height="15" viewBox="0 0 16 16"><circle cx="8" cy="8" r="8" fill="#4285f4"/><path d="M5.500 11.500L12.300 4.700" stroke="#fff" stroke-width="2.200" stroke-linecap="round" fill="none"/><circle cx="4" cy="8.500" r="1.300" fill="#fbbc04"/></svg>
<svg class="abs" style="left:994.500px;top:545px" width="14.400" height="14.400" viewBox="0 0 24 24"><path d="M10 6L8.590 7.410 13.170 12l-4.580 4.590L10 18l6-6z" fill="#4a4d51" stroke="#4a4d51" stroke-width=".6"/></svg>
<!--SIDE-CONTENT-->

<!-- ======= MENUS ======= -->
<div id="menu1" class="abs"></div>
<div class="abs" style="left:197px;top:160.500px;width:174.500px;height:47.500px;background:#f1f3f4"></div>
<div class="abs" style="left:197px;top:207.6px;width:174.500px;height:1px;background:#e0e0e0"></div>
<div class="abs" style="left:197px;top:255.7px;width:174.500px;height:1px;background:#e0e0e0"></div>
<div class="abs" style="left:197px;top:303.9px;width:174.500px;height:1px;background:#e0e0e0"></div>
<div class="abs" style="left:197px;top:352.0px;width:174.500px;height:1px;background:#e0e0e0"></div>
<div class="abs" style="left:197px;top:400.0px;width:174.500px;height:1px;background:#e0e0e0"></div>
<div class="abs" style="left:197px;top:448.0px;width:174.500px;height:1px;background:#e0e0e0"></div>
<svg class="abs" style="left:200.300px;top:176.500px" width="14.400" height="14.400" viewBox="0 0 24 24"><path d="M9 16.170L4.830 12l-1.420 1.410L9 19 21 7l-1.410-1.410z" fill="#5f6368"/></svg>
<svg class="abs" style="left:356.7px;top:181.2px" width="5.200" height="6" viewBox="0 0 5.200 6"><path d="M0 0L5.200 3L0 6Z" fill="#202124"/></svg>
<svg class="abs" style="left:356.7px;top:229.3px" width="5.200" height="6" viewBox="0 0 5.200 6"><path d="M0 0L5.200 3L0 6Z" fill="#8d9094"/></svg>
<svg class="abs" style="left:356.7px;top:277.3px" width="5.200" height="6" viewBox="0 0 5.200 6"><path d="M0 0L5.200 3L0 6Z" fill="#8d9094"/></svg>
<svg class="abs" style="left:356.7px;top:325.4px" width="5.200" height="6" viewBox="0 0 5.200 6"><path d="M0 0L5.200 3L0 6Z" fill="#8d9094"/></svg>
<svg class="abs" style="left:356.7px;top:373.4px" width="5.200" height="6" viewBox="0 0 5.200 6"><path d="M0 0L5.200 3L0 6Z" fill="#8d9094"/></svg>
<svg class="abs" style="left:356.7px;top:421.3px" width="5.200" height="6" viewBox="0 0 5.200 6"><path d="M0 0L5.200 3L0 6Z" fill="#8d9094"/></svg>
<svg class="abs" style="left:353.09999999999997px;top:463px" width="5.200" height="6" viewBox="0 0 5.200 6"><path d="M0 0L5.200 3L0 6Z" fill="#8d9094"/></svg>
<div class="t" style="transform-origin:0 0;transform:scaleX(1.0263);left:227.600px;top:178.37px;font-size:11.73px;color:#111;">Normal text</div>
<div class="t" style="transform-origin:0 0;transform:scaleX(0.9165);left:227.800px;top:218.150px;font-size:27.7px;color:#000;">Title</div>
<div class="t" style="transform-origin:0 0;transform:scaleX(1.0117);left:227.800px;top:273.060px;font-size:16px;color:#666;">Subtitle</div>
<div class="abs" style="left:228.200px;top:316.300px;width:99.300px;height:23.700px;background:#ff9900"></div>
<div class="t" style="transform-origin:0 0;transform:scaleX(0.9943);left:228.800px;top:318.840px;font-size:21.33px;font-family:'Liberation Serif',serif;color:#000;font-weight:bold;">Heading 1</div>
<div class="t" style="transform-origin:0 0;transform:scaleX(1.0065);left:227.800px;top:368.150px;font-size:17.07px;color:#111;">Heading 2</div>
<div class="t" style="transform-origin:0 0;transform:scaleX(1.0142);left:227.800px;top:417.560px;font-size:14.93px;color:#434343;">Heading 3</div>
<div class="t" style="transform-origin:0 0;transform:scaleX(0.9932);left:228.300px;top:461.200px;font-size:11.400px;color:#3c4043;">Options</div>
<div id="menu2" class="abs"></div>
<div class="abs" style="left:401px;top:198.400px;width:186px;height:1px;background:#e0e0e0"></div>
<div class="abs" style="left:371.500px;top:206px;width:215.500px;height:25px;background:#f1f3f4"></div>
<div class="t" style="transform-origin:0 0;transform:scaleX(1.0239);left:401.800px;top:174.450px;font-size:11.4px;color:#333;">Apply 'Normal text'</div>
<div class="t" style="transform-origin:0 0;transform:scaleX(1.0265);left:522px;top:174.450px;font-size:11.4px;color:#80868b;">Ctrl+Alt+0</div>
<div class="t" style="transform-origin:0 0;transform:scaleX(1.0212);left:401.800px;top:213.500px;font-size:11.4px;color:#3c4043;">Update 'Normal text' to match</div>
<!--MENUS-->
<div class="abs" style="left:0;top:574.500px;width:1024px;height:1.500px;background:#111"></div>

</body>
</html>
